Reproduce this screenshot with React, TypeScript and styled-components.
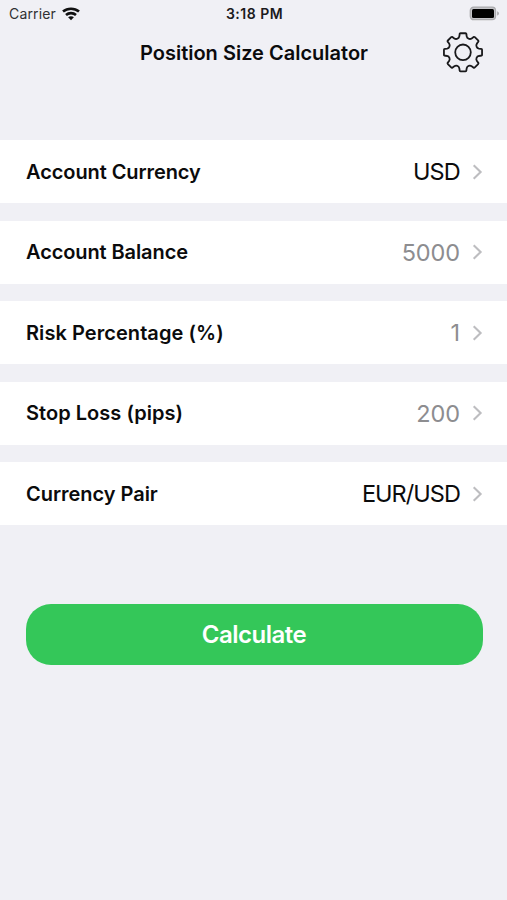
import React from "react";
import styled, { createGlobalStyle } from "styled-components";

const GlobalStyle = createGlobalStyle`
  * { box-sizing: border-box; }
  html, body { margin: 0; background: #f0f0f5; }
  body { font-family: Inter, "Liberation Sans", sans-serif; color: #0b0b0c; }
  button { font: inherit; border: 0; padding: 0; background: none; color: inherit; }
`;

const Screen = styled.main`
  width: 100%;
  height: 900px;
  display: flex;
  flex-direction: column;
  background: #f0f0f5;
  overflow: hidden;
`;

const StatusBar = styled.header`
  height: 27px;
  flex: none;
  display: grid;
  grid-template-columns: 1fr auto 1fr;
  align-items: center;
  padding: 0 7px 0 9px;
  font-size: 14px;
  line-height: 27px;
`;

const Carrier = styled.div`
  display: flex;
  align-items: center;
  gap: 6px;
  color: #303033;
  letter-spacing: 0.15px;
`;

const Clock = styled.time`
  font-weight: 600;
  font-size: 14px;
  letter-spacing: 0.5px;
  color: #1b1b1d;
`;

const BatterySlot = styled.div`
  display: flex;
  justify-content: flex-end;
`;

const NavBar = styled.nav`
  height: 51px;
  flex: none;
  display: grid;
  grid-template-columns: 1fr auto 1fr;
  align-items: center;
  padding-right: 23px;
  padding-left: 24px;
`;

const Title = styled.h1`
  grid-column: 2;
  margin: 0;
  font-size: 20px;
  line-height: 24px;
  font-weight: 600;
  letter-spacing: 0;
`;

const SettingsButton = styled.button`
  justify-self: end;
  display: flex;
`;

const Form = styled.section`
  margin-top: 62px;
  display: flex;
  flex-direction: column;
  gap: 17.6px;
`;

const Row = styled.div`
  height: 63px;
  display: flex;
  align-items: center;
  background: #fff;
  padding: 0 24px 0 26px;
`;

const Label = styled.span<{ $tracking: number }>`
  flex: 1;
  font-size: 20px;
  font-weight: 600;
  letter-spacing: ${(p) => p.$tracking}px;
`;

const Value = styled.span<{ $muted?: boolean; $tracking: number }>`
  font-size: 23.5px;
  letter-spacing: ${(p) => p.$tracking}px;
  margin-right: 12px;
  color: ${(p) => (p.$muted ? "#8d8d90" : "#0b0b0c")};
`;

const CalculateButton = styled.button`
  && {
    height: 61px;
    margin: 79px 24.5px 0 25.5px;
    border-radius: 25px;
    background: #34c759;
    color: #fff;
    font-size: 24px;
    font-weight: 600;
    letter-spacing: -0.5px;
  }
`;

const fields = [
  { label: "Account Currency", value: "USD", muted: false, labelTracking: -0.08, valueTracking: -0.8 },
  { label: "Account Balance", value: "5000", muted: true, labelTracking: -0.1, valueTracking: -0.1 },
  { label: "Risk Percentage (%)", value: "1", muted: true, labelTracking: 0.06, valueTracking: 0 },
  { label: "Stop Loss (pips)", value: "200", muted: true, labelTracking: 0.04, valueTracking: -0.1 },
  { label: "Currency Pair", value: "EUR/USD", muted: false, labelTracking: -0.03, valueTracking: -0.95 },
];

const WifiIcon = () => (
  <svg width="18" height="14" viewBox="0 0 18 14" fill="none" stroke="#111" strokeWidth="2.6">
    <path d="M1 4.6C5.5 0.7 12.5 0.7 17 4.6" />
    <path d="M4 8C6.8 5.5 11.2 5.5 14 8" />
    <path d="M9 13.2 6.1 10.3C7.7 8.8 10.3 8.8 11.9 10.3Z" fill="#111" stroke="none" />
  </svg>
);

const BatteryIcon = () => (
  <svg width="31" height="15" viewBox="0 0 31 15">
    <rect x="1.3" y="1.1" width="25.2" height="12.6" rx="3.4" fill="#c5c5c9" stroke="#aaaaad" strokeWidth="1.3" />
    <rect x="3" y="2.9" width="22" height="9.2" rx="1.5" fill="#000" />
    <path d="M28.1 5.2C30.6 6 30.6 8.8 28.1 9.6Z" fill="#aaaaad" />
  </svg>
);

const polar = (radius: number, degrees: number) => {
  const a = ((degrees - 90) * Math.PI) / 180;
  return `${(20 + radius * Math.cos(a)).toFixed(2)} ${(20 + radius * Math.sin(a)).toFixed(2)}`;
};

const gearPath =
  Array.from({ length: 8 }, (_, i) => {
    const a = i * 45;
    return [
      `${i === 0 ? "M" : "L"}${polar(17.9, a - 11)}`,
      `Q${polar(19.4, a - 10.5)} ${polar(19.2, a - 7)}`,
      `L${polar(19.2, a + 7)}`,
      `Q${polar(19.4, a + 10.5)} ${polar(17.9, a + 11)}`,
      `L${polar(16.4, a + 13)}`,
      `Q${polar(14.7, a + 16)} ${polar(14.7, a + 22.5)}`,
      `Q${polar(14.7, a + 29)} ${polar(16.4, a + 32)}`,
    ].join("");
  }).join("") + "Z";

const GearIcon = () => (
  <svg width="41" height="41" viewBox="0 -0.3 41 41" fill="none" stroke="#19191b" strokeWidth="1.8" strokeLinejoin="round">
    <path d={gearPath} />
    <circle cx="20" cy="20" r="7.8" />
  </svg>
);

const Chevron = () => (
  <svg width="11" height="16" viewBox="0 0 11 16" fill="none" stroke="#bdbdc0" strokeWidth="2.1">
    <path d="M1.7 1.3 8.6 8l-6.9 6.7" />
  </svg>
);

export default function App() {
  return (
    <>
      <GlobalStyle />
      <Screen>
        <StatusBar>
          <Carrier>
            Carrier
            <WifiIcon />
          </Carrier>
          <Clock>3:18 PM</Clock>
          <BatterySlot>
            <BatteryIcon />
          </BatterySlot>
        </StatusBar>
        <NavBar>
          <Title>Position Size Calculator</Title>
          <SettingsButton aria-label="Settings">
            <GearIcon />
          </SettingsButton>
        </NavBar>
        <Form>
          {fields.map((field) => (
            <Row key={field.label}>
              <Label $tracking={field.labelTracking}>{field.label}</Label>
              <Value $muted={field.muted} $tracking={field.valueTracking}>
                {field.value}
              </Value>
              <Chevron />
            </Row>
          ))}
        </Form>
        <CalculateButton>Calculate</CalculateButton>
      </Screen>
    </>
  );
}
